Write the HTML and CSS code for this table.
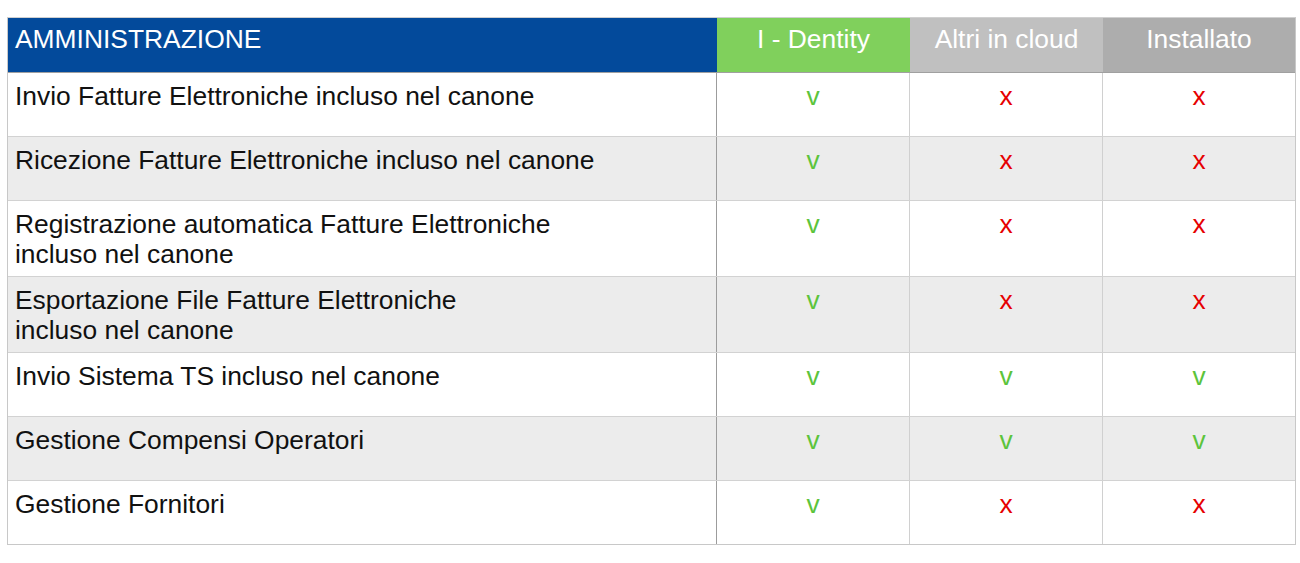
FILE: index.html
```html
<!DOCTYPE html>
<html lang="it">
<head>
<meta charset="utf-8">
<title>Amministrazione</title>
<link rel="stylesheet" href="styles.css">
</head>
<body>
<div class="table">
  <div class="row head">
    <div class="cell label h-blue">AMMINISTRAZIONE</div>
    <div class="cell mark h-green">I - Dentity</div>
    <div class="cell mark h-gray">Altri in cloud</div>
    <div class="cell mark h-dark">Installato</div>
  </div>
  <div class="row">
    <div class="cell label">Invio Fatture Elettroniche incluso nel canone</div>
    <div class="cell mark yes">v</div>
    <div class="cell mark no">x</div>
    <div class="cell mark no">x</div>
  </div>
  <div class="row alt">
    <div class="cell label">Ricezione Fatture Elettroniche incluso nel canone</div>
    <div class="cell mark yes">v</div>
    <div class="cell mark no">x</div>
    <div class="cell mark no">x</div>
  </div>
  <div class="row">
    <div class="cell label">Registrazione automatica Fatture Elettroniche<br>incluso nel canone</div>
    <div class="cell mark yes">v</div>
    <div class="cell mark no">x</div>
    <div class="cell mark no">x</div>
  </div>
  <div class="row alt">
    <div class="cell label">Esportazione File Fatture Elettroniche<br>incluso nel canone</div>
    <div class="cell mark yes">v</div>
    <div class="cell mark no">x</div>
    <div class="cell mark no">x</div>
  </div>
  <div class="row">
    <div class="cell label">Invio Sistema TS incluso nel canone</div>
    <div class="cell mark yes">v</div>
    <div class="cell mark yes">v</div>
    <div class="cell mark yes">v</div>
  </div>
  <div class="row alt">
    <div class="cell label">Gestione Compensi Operatori</div>
    <div class="cell mark yes">v</div>
    <div class="cell mark yes">v</div>
    <div class="cell mark yes">v</div>
  </div>
  <div class="row">
    <div class="cell label">Gestione Fornitori</div>
    <div class="cell mark yes">v</div>
    <div class="cell mark no">x</div>
    <div class="cell mark no">x</div>
  </div>
</div>
</body>
</html>
```

FILE: styles.css
```css
html, body {
  margin: 0;
  padding: 0;
  background: #ffffff;
}

body {
  padding: 17px 0 0 7px;
  font-family: "Liberation Sans", Arial, sans-serif;
  font-size: 26.4px;
  line-height: 30px;
  color: #111111;
}

.table {
  width: 1289px;
  border: 1px solid #c8c8c8;
  border-top-color: #d0d0d0;
  box-sizing: border-box;
}

.row {
  display: grid;
  grid-template-columns: 709px 193px 193px 192px;
  border-bottom: 1px solid #d2d2d2;
  background: #ffffff;
}

.row:last-child {
  border-bottom: none;
}

.row.alt {
  background: #ececec;
}

.cell {
  box-sizing: border-box;
  min-height: 63px;
  padding: 8px 7px 7px 7px;
  border-right: 1px solid #d0d0d0;
}

.cell:last-child {
  border-right: none;
}

.cell.label {
  border-right-color: #9c9c9c;
}

.mark {
  text-align: center;
}

.yes {
  color: #5cc43c;
}

.no {
  color: #e60000;
}

.head {
  border-bottom: 1px solid #a0a0a0;
}

.head .cell {
  min-height: 54px;
  padding-top: 6px;
  color: #ffffff;
  border-right: none;
}

.h-blue {
  background: #034a9b;
}

.h-green {
  background: #80d05c;
}

.h-gray {
  background: #c0c0c0;
  color: #f4f4f4;
}

.h-dark {
  background: #adadad;
}
```
